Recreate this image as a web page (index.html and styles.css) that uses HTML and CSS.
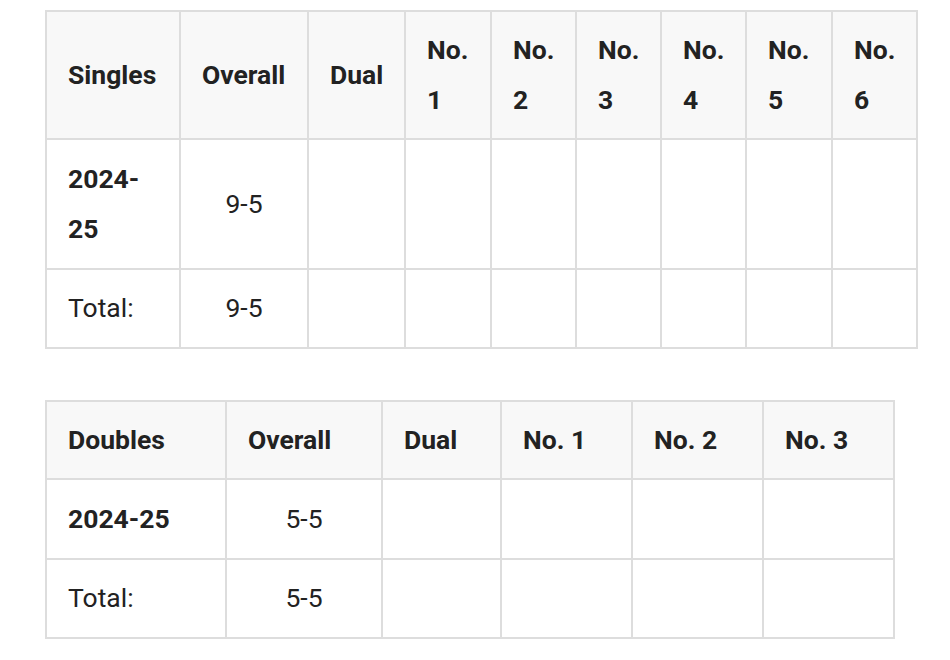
FILE: index.html
```html
<!DOCTYPE html>
<html>
<head>
<meta charset="utf-8">
<link rel="stylesheet" href="styles.css">
</head>
<body>
<div class="page">
  <table class="stats singles">
    <thead>
      <tr>
        <th>Singles</th><th>Overall</th><th>Dual</th><th>No. 1</th><th>No. 2</th><th>No. 3</th><th>No. 4</th><th>No. 5</th><th>No. 6</th>
      </tr>
    </thead>
    <tbody>
      <tr>
        <td class="year">2024-25</td><td class="num">9-5</td><td></td><td></td><td></td><td></td><td></td><td></td><td></td>
      </tr>
      <tr>
        <td>Total:</td><td class="num">9-5</td><td></td><td></td><td></td><td></td><td></td><td></td><td></td>
      </tr>
    </tbody>
  </table>
  <table class="stats doubles">
    <thead>
      <tr>
        <th>Doubles</th><th>Overall</th><th>Dual</th><th>No. 1</th><th>No. 2</th><th>No. 3</th>
      </tr>
    </thead>
    <tbody>
      <tr>
        <td class="year">2024-25</td><td class="num">5-5</td><td></td><td></td><td></td><td></td>
      </tr>
      <tr>
        <td>Total:</td><td class="num">5-5</td><td></td><td></td><td></td><td></td>
      </tr>
    </tbody>
  </table>
</div>
</body>
</html>
```
FILE: styles.css
```css
html, body {
  margin: 0;
  padding: 0;
  background: #ffffff;
}
.page {
  padding: 10px 0 0 45px;
  font-family: Roboto, "Liberation Sans", Arial, sans-serif;
  color: #222222;
}
.stats {
  border-collapse: collapse;
  table-layout: fixed;
  font-size: 26.5px;
  line-height: 50px;
  margin-bottom: 51px;
}
.stats th, .stats td {
  box-sizing: border-box;
  border: 2px solid #dddddd;
  padding: 13.75px 21px;
  text-align: left;
  vertical-align: middle;
}
.stats th {
  padding-top: 13px;
  padding-bottom: 13px;
  background: #f8f8f8;
  font-weight: 700;
}
.stats td.year {
  font-weight: 700;
}
.stats td.num {
  text-align: center;
}
.singles { width: 873px; }
.singles th:nth-child(1) { width: 134px; }
.singles th:nth-child(2) { width: 128px; }
.singles th:nth-child(3) { width: 97px; }
.singles th:nth-child(4) { width: 86px; }
.singles th:nth-child(5) { width: 85px; }
.singles th:nth-child(6) { width: 85px; }
.singles th:nth-child(7) { width: 85px; }
.singles th:nth-child(8) { width: 86px; }
.singles th:nth-child(9) { width: 85px; }
.doubles { width: 850px; }
.doubles th:nth-child(1) { width: 180px; }
.doubles th:nth-child(2) { width: 156px; }
.doubles th:nth-child(3) { width: 119px; }
.doubles th:nth-child(4) { width: 131px; }
.doubles th:nth-child(5) { width: 131px; }
.doubles th:nth-child(6) { width: 131px; }
```
